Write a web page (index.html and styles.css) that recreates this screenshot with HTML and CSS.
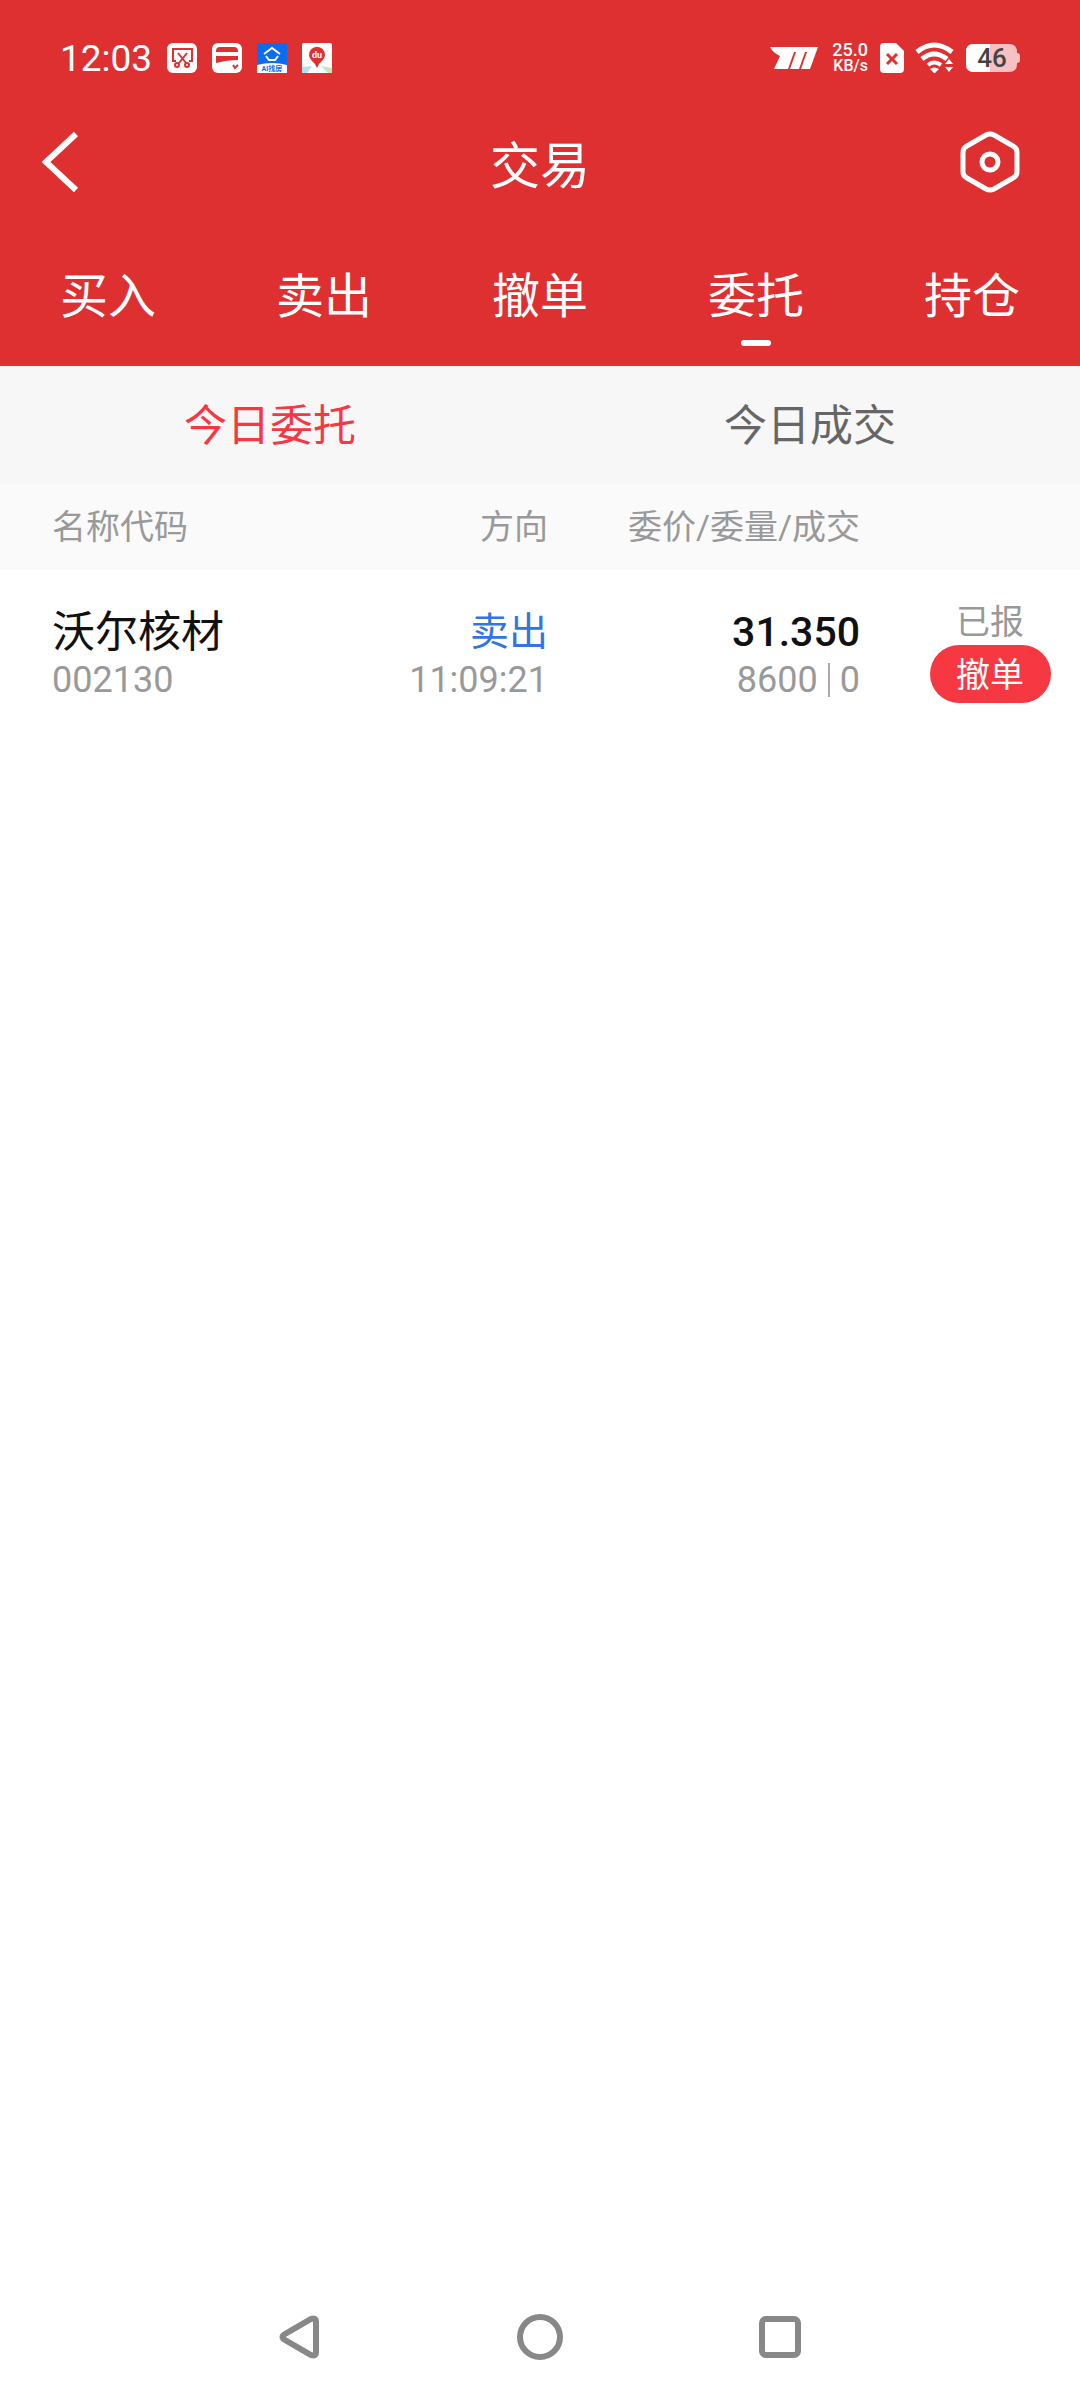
FILE: index.html
```
<!DOCTYPE html>
<html lang="zh-CN">
<head>
    <meta charset="UTF-8">
    <meta name="viewport" content="width=device-width, initial-scale=1.0">
    <title>交易</title>
    <link rel="stylesheet" href="styles.css">
</head>
<body>
    <header class="top">
        <!-- Status bar -->
        <div class="status-bar">
            <div class="status-left">
                <span class="clock">12:03</span>
                <svg class="app-icon" viewBox="0 0 30 30">
                    <rect width="30" height="30" rx="6" fill="#fff"/>
                    <g fill="none" stroke="#de3031" stroke-width="2">
                        <path d="M9 18H6V6h19v12h-3"/>
                        <path d="M11 10l8 10M20 10l-8 10"/>
                        <circle cx="10" cy="22" r="2"/>
                        <circle cx="20" cy="22" r="2"/>
                    </g>
                </svg>
                <svg class="app-icon" viewBox="0 0 30 30">
                    <rect width="30" height="30" rx="6" fill="#fff"/>
                    <path d="M4 8q0-4 4-4h14q4 0 4 4v1H4zM4 13h22v4q-10 0-22 3z" fill="#de3031"/>
                    <path d="M21 22l2 3 3-3" fill="none" stroke="#de3031" stroke-width="2"/>
                </svg>
                <svg class="app-icon" viewBox="0 0 30 30">
                    <rect width="30" height="30" fill="#fff"/>
                    <path d="M0 0h30v22q-15-4-30 0z" fill="#0b6cf0"/>
                    <path d="M7 11l8-6 8 6M9 13l3 4h6l3-4" fill="none" stroke="#fff" stroke-width="2"/>
                    <text class="app-name" x="15" y="28">AI找房</text>
                </svg>
                <svg class="app-icon" viewBox="0 0 30 30">
                    <rect width="30" height="30" rx="2" fill="#fff"/>
                    <path d="M0 24l10-1-5 7H0z" fill="#b5def5"/>
                    <path d="M19 23l11 2v5h-4z" fill="#c6e6b4"/>
                    <path d="M15 25q-1-4-5-7a8 8 0 1 1 10 0q-4 3-5 7z" fill="#de3031"/>
                    <text class="map-name" x="15" y="15">du</text>
                </svg>
            </div>
            <div class="status-right">
                <svg class="brand" viewBox="0 0 48 22">
                    <path d="M0 0h48l-8 22h-9l6-17h-2l-6 17h-9l6-17h-2l-6 17H4l6-13q-7-3-10-9z" fill="#fff"/>
                </svg>
                <div class="speed"><span>25.0</span><span class="unit">KB/s</span></div>
                <svg class="sim" viewBox="0 0 24 30">
                    <path d="M4 0h12l8 8v18q0 4-4 4H4q-4 0-4-4V4q0-4 4-4z" fill="#fff"/>
                    <path d="M7 11l10 10M17 11L7 21" stroke="#de3031" stroke-width="3"/>
                </svg>
                <svg class="wifi" viewBox="0 0 38 30">
                    <g fill="none" stroke="#fff" stroke-width="5">
                        <path d="M1 9q17-14 35 0"/>
                        <path d="M6 16q12-10 25 0"/>
                        <path d="M12 22q6-5 13 0" stroke-width="4"/>
                    </g>
                    <path d="M14 26q4-3 9 0l-4 4h-1zM29 21l4-5 4 5zM29 24h8l-4 5z" fill="#fff"/>
                </svg>
                <svg class="battery" viewBox="0 0 54 28">
                    <path d="M8 0h35q8 0 8 8v1q3 0 3 3v4q0 3-3 3v1q0 8-8 8H8q-8 0-8-8V8q0-8 8-8z" fill="#f8c0c3"/>
                    <path d="M8 0h16v28H8q-8 0-8-8V8q0-8 8-8z" fill="#fff"/>
                    <text class="level" x="26" y="23">46</text>
                </svg>
            </div>
        </div>

        <!-- Title -->
        <div class="title-bar">
            <button class="icon-btn" aria-label="返回">
                <svg width="36" height="60" viewBox="0 0 36 60"><path d="M34 2L4 30l30 28" fill="none" stroke="#fff" stroke-width="6"/></svg>
            </button>
            <h1>交易</h1>
            <button class="icon-btn settings" aria-label="设置">
                <svg width="58" height="62" viewBox="0 0 58 62">
                    <g fill="none" stroke="#fff" stroke-width="5">
                        <path d="M25 4q4-2 8 0l19 11q4 2 4 6v20q0 4-4 6L33 58q-4 2-8 0L6 47q-4-2-4-6V21q0-4 4-6z"/>
                        <circle cx="29" cy="31" r="8"/>
                    </g>
                </svg>
            </button>
        </div>

        <nav class="tabs">
            <a href="#">买入</a>
            <a href="#">卖出</a>
            <a href="#">撤单</a>
            <a href="#" class="active">委托</a>
            <a href="#">持仓</a>
        </nav>
    </header>

    <main>
        <div class="sub-tabs">
            <button class="active">今日委托</button>
            <button>今日成交</button>
        </div>

        <table class="orders">
            <thead>
                <tr>
                    <th class="col-name">名称代码</th>
                    <th class="col-side">方向</th>
                    <th class="col-price">委价/委量/成交</th>
                    <th class="col-state"></th>
                </tr>
            </thead>
            <tbody>
                <tr>
                    <td class="col-name">
                        <div class="name">沃尔核材</div>
                        <div class="sub">002130</div>
                    </td>
                    <td class="col-side">
                        <div class="side">卖出</div>
                        <div class="sub">11:09:21</div>
                    </td>
                    <td class="col-price">
                        <div class="price">31.350</div>
                        <div class="sub amount"><span>8600</span><span class="done">0</span></div>
                    </td>
                    <td class="col-state">
                        <div class="state">已报</div>
                        <button class="cancel">撤单</button>
                    </td>
                </tr>
            </tbody>
        </table>
    </main>

    <!-- System navigation -->
    <footer class="nav-bar">
        <button aria-label="返回">
            <svg width="48" height="48" viewBox="0 0 48 48"><path d="M35 6q5-2 5 3v30q0 5-5 3L9 27q-5-3 0-6z" fill="none" stroke="#888" stroke-width="6"/></svg>
        </button>
        <button aria-label="主页">
            <svg width="48" height="48" viewBox="0 0 48 48"><circle cx="24" cy="24" r="20" fill="none" stroke="#888" stroke-width="6"/></svg>
        </button>
        <button aria-label="最近任务">
            <svg width="48" height="48" viewBox="0 0 48 48"><rect x="6" y="6" width="36" height="36" rx="4" fill="none" stroke="#888" stroke-width="6"/></svg>
        </button>
    </footer>
</body>
</html>
```
FILE: styles.css
```
* {
    box-sizing: border-box;
}

body {
    margin: 0;
    min-height: 100vh;
    display: flex;
    flex-direction: column;
    background-color: #fff;
    color: #111;
    font-family: Roboto, "Noto Sans CJK SC", sans-serif;
}

button {
    padding: 0;
    border: none;
    background: none;
    font-family: inherit;
    cursor: pointer;
}

svg {
    display: block;
    overflow: visible;
}

.top {
    background-color: #de3031;
    color: #fff;
}

/* Status bar */
.status-bar {
    display: flex;
    justify-content: space-between;
    align-items: center;
    height: 116px;
    padding: 0 60px;
}

.status-left {
    display: flex;
    align-items: center;
    gap: 15px;
}

.clock {
    font-size: 37px;
}

.app-icon {
    width: 30px;
    height: 30px;
}

.app-name {
    font-size: 7px;
    font-weight: bold;
    fill: #0b6cf0;
    text-anchor: middle;
}

.map-name {
    font-size: 9px;
    font-weight: bold;
    fill: #fff;
    text-anchor: middle;
}

.status-right {
    display: flex;
    align-items: center;
    gap: 12px;
}

.brand {
    width: 48px;
    height: 22px;
    margin-right: 2px;
}

.speed {
    display: flex;
    flex-direction: column;
    align-items: flex-end;
    font-size: 18px;
    font-weight: 500;
    line-height: 16px;
}

.unit {
    font-size: 16px;
}

.sim {
    width: 24px;
    height: 30px;
}

.wifi {
    width: 38px;
    height: 30px;
}

.battery {
    width: 54px;
    height: 28px;
}

.level {
    font-size: 26px;
    font-weight: 500;
    fill: #444;
    text-anchor: middle;
}

/* Title */
.title-bar {
    display: grid;
    grid-template-columns: 1fr auto 1fr;
    align-items: center;
    height: 92px;
}

.icon-btn {
    justify-self: start;
    margin-left: 42px;
}

.settings {
    justify-self: end;
    margin: 0 61px 0 0;
}

h1 {
    margin: 0;
    font-size: 50px;
    font-weight: normal;
}

.tabs {
    display: flex;
    height: 158px;
}

.tabs a {
    flex: 1;
    display: flex;
    flex-direction: column;
    align-items: center;
    padding-top: 54px;
    color: #fff;
    font-size: 48px;
    line-height: 70px;
    text-decoration: none;
}

.tabs .active::after {
    content: "";
    width: 30px;
    height: 6px;
    margin-top: 8px;
    border-radius: 3px;
    background-color: #fff;
}

main {
    flex: 1;
}

.sub-tabs {
    display: flex;
    height: 118px;
    background-color: #f7f7f7;
}

.sub-tabs button {
    flex: 1;
    padding-bottom: 6px;
    color: #666;
    font-size: 43px;
}

.sub-tabs .active {
    color: #f63842;
}

/* Orders */
.orders {
    width: 100%;
    border-collapse: collapse;
    table-layout: fixed;
}

.orders th {
    height: 86px;
    padding: 0 0 6px;
    background-color: #fafafa;
    color: #999;
    font-size: 34px;
    font-weight: normal;
}

.orders td {
    padding: 38px 0 0;
    vertical-align: top;
    line-height: 48px;
}

.orders .col-name {
    padding-left: 52px;
    text-align: left;
}

.orders .col-side {
    width: 260px;
    padding-right: 12px;
    text-align: right;
}

.orders .col-price {
    width: 340px;
    padding-right: 40px;
    text-align: right;
}

.orders .col-state {
    width: 180px;
    padding-top: 29px;
    text-align: center;
}

.name {
    font-size: 43px;
}

.side {
    color: #3375e0;
    font-size: 39px;
}

.price {
    font-size: 41px;
    font-weight: 500;
}

.sub {
    color: #999;
    font-size: 36px;
}

.amount {
    display: flex;
    justify-content: flex-end;
    align-items: center;
}

.done {
    margin-left: 10px;
    padding-left: 10px;
    border-left: 2px solid #aaa;
    line-height: 34px;
}

.state {
    color: #999;
    font-size: 34px;
    line-height: 46px;
}

.cancel {
    display: block;
    width: 121px;
    height: 58px;
    margin: 0 auto;
    padding-bottom: 4px;
    border-radius: 29px;
    background-color: #f63842;
    color: #fff;
    font-size: 34px;
}

/* System navigation */
.nav-bar {
    display: flex;
    justify-content: center;
    gap: 192px;
    height: 126px;
}
```
